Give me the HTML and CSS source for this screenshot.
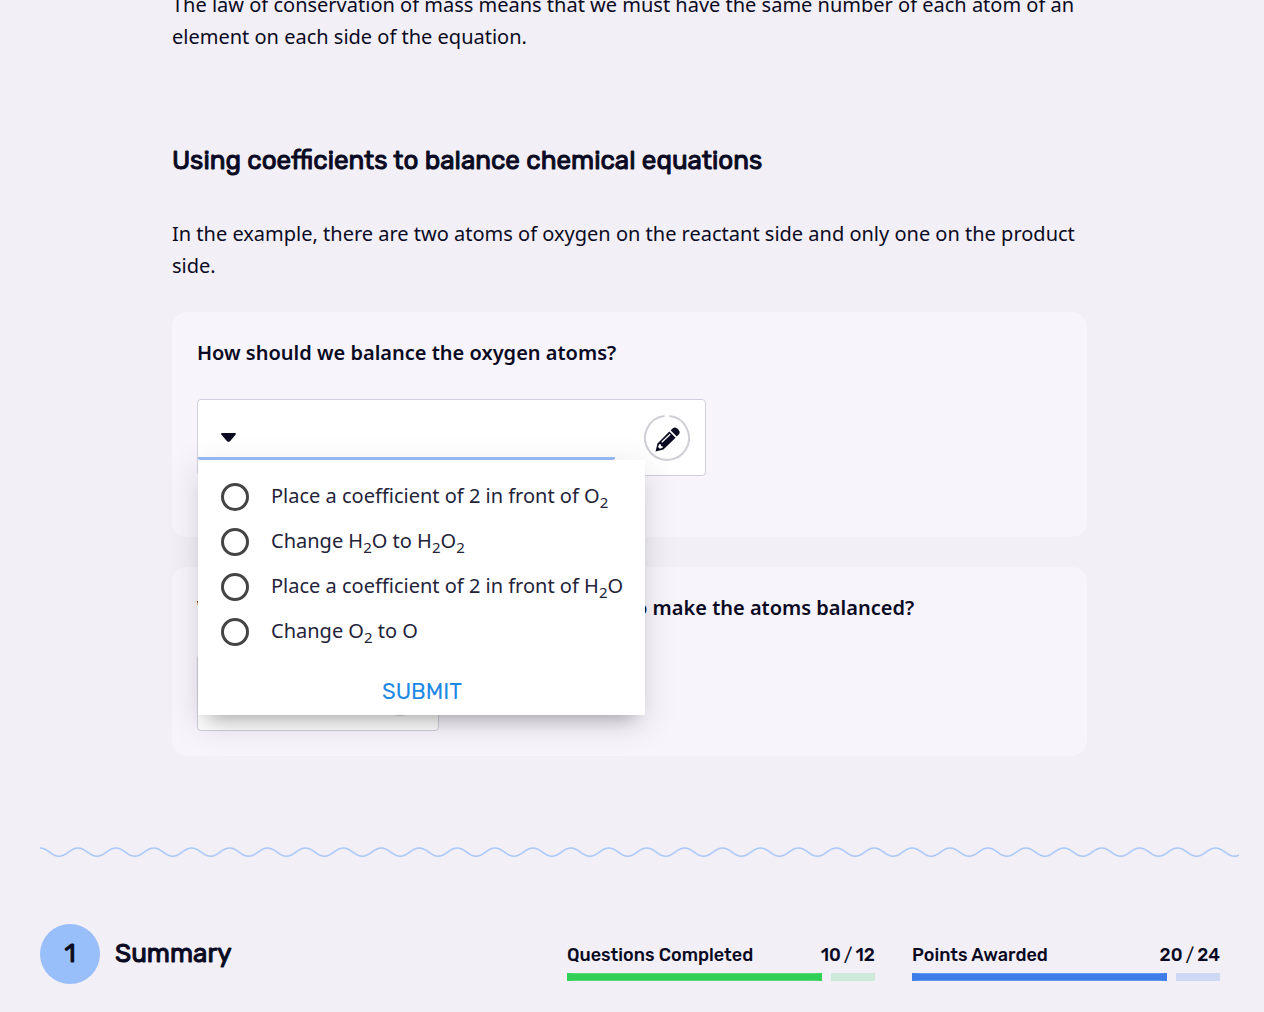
FILE: index.html
```html
<!DOCTYPE html>
<html lang="en">
<head>
<meta charset="utf-8">
<meta name="viewport" content="width=device-width, initial-scale=1">
<title>Balancing chemical equations</title>
<link rel="stylesheet" href="styles.css">
</head>
<body>
<svg class="defs" aria-hidden="true">
  <symbol id="pencil" viewBox="0 0 46 46">
    <path d="M25.4 1.1A22 22 0 1 1 20.6 1.1" fill="none" stroke="#d0cfd6" stroke-width="2"/>
    <path d="M11.500 36.500l2-8L25.300 16.400l6.300 6.300L19.400 34.600z" fill="#0a0a23"/>
    <path d="M26.600 15.300l2.600-2.300q2-1.300 4 .6l1.500 1.500q1.900 2 .5 4L32.800 21.400z" fill="#0a0a23"/>
    <path d="M17.800 27.200l8.400-8" fill="none" stroke="#fff" stroke-width="1.300"/>
    <path d="M14.600 30.600l.9-1.600 1.300.3.400 1.700 1.700.4-.1 1.100-2.900 1.300-1.900-1.800z" fill="#fff"/>
  </symbol>
</svg>
<main class="page">
  <article class="lesson">
    <p>The law of conservation of mass means that we must have the same number of each atom of an element on each side of the equation.</p>
    <h2>Using coefficients to balance chemical equations</h2>
    <p>In the example, there are two atoms of oxygen on the reactant side and only one on the product side.</p>

    <section class="card card-tall">
      <h3 id="q1">How should we balance the oxygen atoms?</h3>
      <div class="answer answer-wide">
        <button class="trigger" type="button" aria-labelledby="q1" aria-expanded="true">
          <svg class="caret" viewBox="0 0 15 9" aria-hidden="true"><path d="M1 0h13q1.500.5.500 1.800L9 8.200q-1.500 1-3 0L.5 1.800Q-.5.5 1 0z" fill="#0a0a23"/></svg>
        </button>
        <svg class="ring" aria-hidden="true"><use href="#pencil"/></svg>
        <form class="menu" aria-labelledby="q1">
          <label class="option"><input type="radio" name="oxygen"><span>Place a coefficient of 2 in front of O<sub>2</sub></span></label>
          <label class="option"><input type="radio" name="oxygen"><span>Change H<sub>2</sub>O to H<sub>2</sub>O<sub>2</sub></span></label>
          <label class="option"><input type="radio" name="oxygen"><span>Place a coefficient of 2 in front of H<sub>2</sub>O</span></label>
          <label class="option"><input type="radio" name="oxygen"><span>Change O<sub>2</sub> to O</span></label>
          <button class="submit" type="button">SUBMIT</button>
        </form>
      </div>
    </section>

    <section class="card">
      <h3 id="q2">What coefficient must we add in front of H2 to make the atoms balanced?</h3>
      <div class="answer answer-narrow">
        <button class="trigger trigger-idle" type="button" aria-labelledby="q2" aria-expanded="false">
          <svg class="caret" viewBox="0 0 15 9" aria-hidden="true"><path d="M1 0h13q1.500.5.500 1.800L9 8.200q-1.500 1-3 0L.5 1.800Q-.5.5 1 0z" fill="#0a0a23"/></svg>
        </button>
        <svg class="ring" aria-hidden="true"><use href="#pencil"/></svg>
      </div>
    </section>
  </article>

  <svg class="wave" aria-hidden="true">
    <defs>
      <pattern id="swell" width="37.920" height="12" patternUnits="userSpaceOnUse">
        <path d="M-1 2H0C8.500 2 10.500 10.200 18.960 10.200S29.400 2 37.920 2h1" fill="none" stroke="#a9c8f8" stroke-width="1.600"/>
      </pattern>
    </defs>
    <rect width="100%" height="12" fill="url(#swell)"/>
  </svg>

  <section class="summary">
    <span class="number">1</span>
    <h2>Summary</h2>
    <div class="stats">
      <div class="stat">
        <div class="stat-text"><span>Questions Completed</span><span class="score"><span>10</span><span class="slash">/</span><span>12</span></span></div>
        <div class="bar green"><span class="done"></span><span class="rest"></span></div>
      </div>
      <div class="stat">
        <div class="stat-text"><span>Points Awarded</span><span class="score"><span>20</span><span class="slash">/</span><span>24</span></span></div>
        <div class="bar blue"><span class="done"></span><span class="rest"></span></div>
      </div>
    </div>
  </section>
</main>
</body>
</html>
```
FILE: styles.css
```css
* { box-sizing: border-box; }
body {
  margin: 0;
  background: #f2eff6;
  color: #0a0a23;
  font: 20px/32px "Noto Sans", sans-serif;
}
h2, h3, p { margin: 0; }
.defs { display: none; }
.page {
  padding-bottom: 28px;
  margin-top: -11px;
}
.lesson {
  max-width: 1000px;
  margin: 0 auto;
  padding: 0 45px 0 40px;
}
h2, .number {
  font: 400 26px/32px Rubik, Roboto, sans-serif;
  -webkit-text-stroke: 1px;
}
.lesson h2 { margin: 92px 0 41px; }
.card {
  margin-top: 30px;
  padding: 25px;
  border-radius: 15px;
  background: #f7f4fc;
}
.card-tall { padding-bottom: 61px; }
h3 {
  margin-bottom: 30px;
  font-size: 20px;
  font-weight: 600;
  line-height: 32px;
}
.answer {
  position: relative;
  display: flex;
  align-items: center;
  justify-content: space-between;
  height: 77px;
  max-width: 100%;
  padding-right: 15px;
  border: 1px solid #d0cfdd;
  border-radius: 4px;
  background: #fff;
}
.answer-wide { width: 509px; }
.answer-narrow { width: 242px; }
.trigger {
  width: 417px;
  height: 60px;
  align-self: flex-start;
  padding: 17px 23px 0;
  border: 0;
  border-bottom: 3px solid #97bcf5;
  border-radius: 0 0 2px 2px;
  background: none;
  text-align: left;
}
.trigger-idle { width: 150px; border-color: transparent; }
.caret { display: block; width: 15px; height: 9px; }
.ring { flex: none; width: 46px; height: 46px; }
.menu {
  position: absolute;
  z-index: 1;
  top: 60px;
  left: 0;
  display: flex;
  flex-direction: column;
  width: 447px;
  height: 255px;
  padding: 14px 22px 0 23px;
  background: #fff;
  box-shadow: 0 14px 18px -12px rgba(0, 0, 0, .3), 0 8px 30px 3px rgba(0, 0, 0, .1);
}
.option {
  display: flex;
  align-items: center;
  gap: 22px;
  height: 45px;
  color: #23233a;
  white-space: nowrap;
}
.option span { padding-bottom: 2px; }
.option input {
  appearance: none;
  flex: none;
  width: 28px;
  height: 28px;
  margin: 0;
  border: 3px solid #444;
  border-radius: 50%;
}
sub {
  font-size: 15px;
  line-height: 0;
}
.submit {
  align-self: center;
  margin-top: 22px;
  padding: 0 8px;
  border: 0;
  background: none;
  color: #1e88e5;
  font: 400 22px/32px Rubik, Roboto, sans-serif;
}
.wave {
  display: block;
  width: calc(100% - 65px);
  height: 12px;
  margin: 90px 25px 0 40px;
}
.summary {
  display: flex;
  align-items: center;
  gap: 15px;
  margin-top: 66px;
  padding: 0 44px 0 40px;
}
.number {
  flex: none;
  width: 60px;
  border-radius: 50%;
  background: #99bffb;
  line-height: 60px;
  text-align: center;
}
.stats {
  display: flex;
  gap: 37px;
  margin-left: auto;
  font: 500 18px/24px Rubik, Roboto, sans-serif;
}
.stat { width: 308px; }
.stat-text {
  display: flex;
  justify-content: space-between;
  margin-top: 16px;
}
.score { display: flex; gap: 3px; }
.slash { font-weight: 400; }
.bar {
  display: grid;
  grid-template-columns: 255fr 44fr;
  gap: 9px;
  height: 8px;
  margin-top: 6px;
}
.done { border: solid; border-width: 1px 8px; }
.green .done { background: #30cf55; border-color: #5cda79 #30cf55; }
.green .rest { background: #cce9d9; }
.blue .done { background: #3e7de7; border-color: #6599ef #3e7de7; }
.blue .rest { background: #cdd8f4; }
```
